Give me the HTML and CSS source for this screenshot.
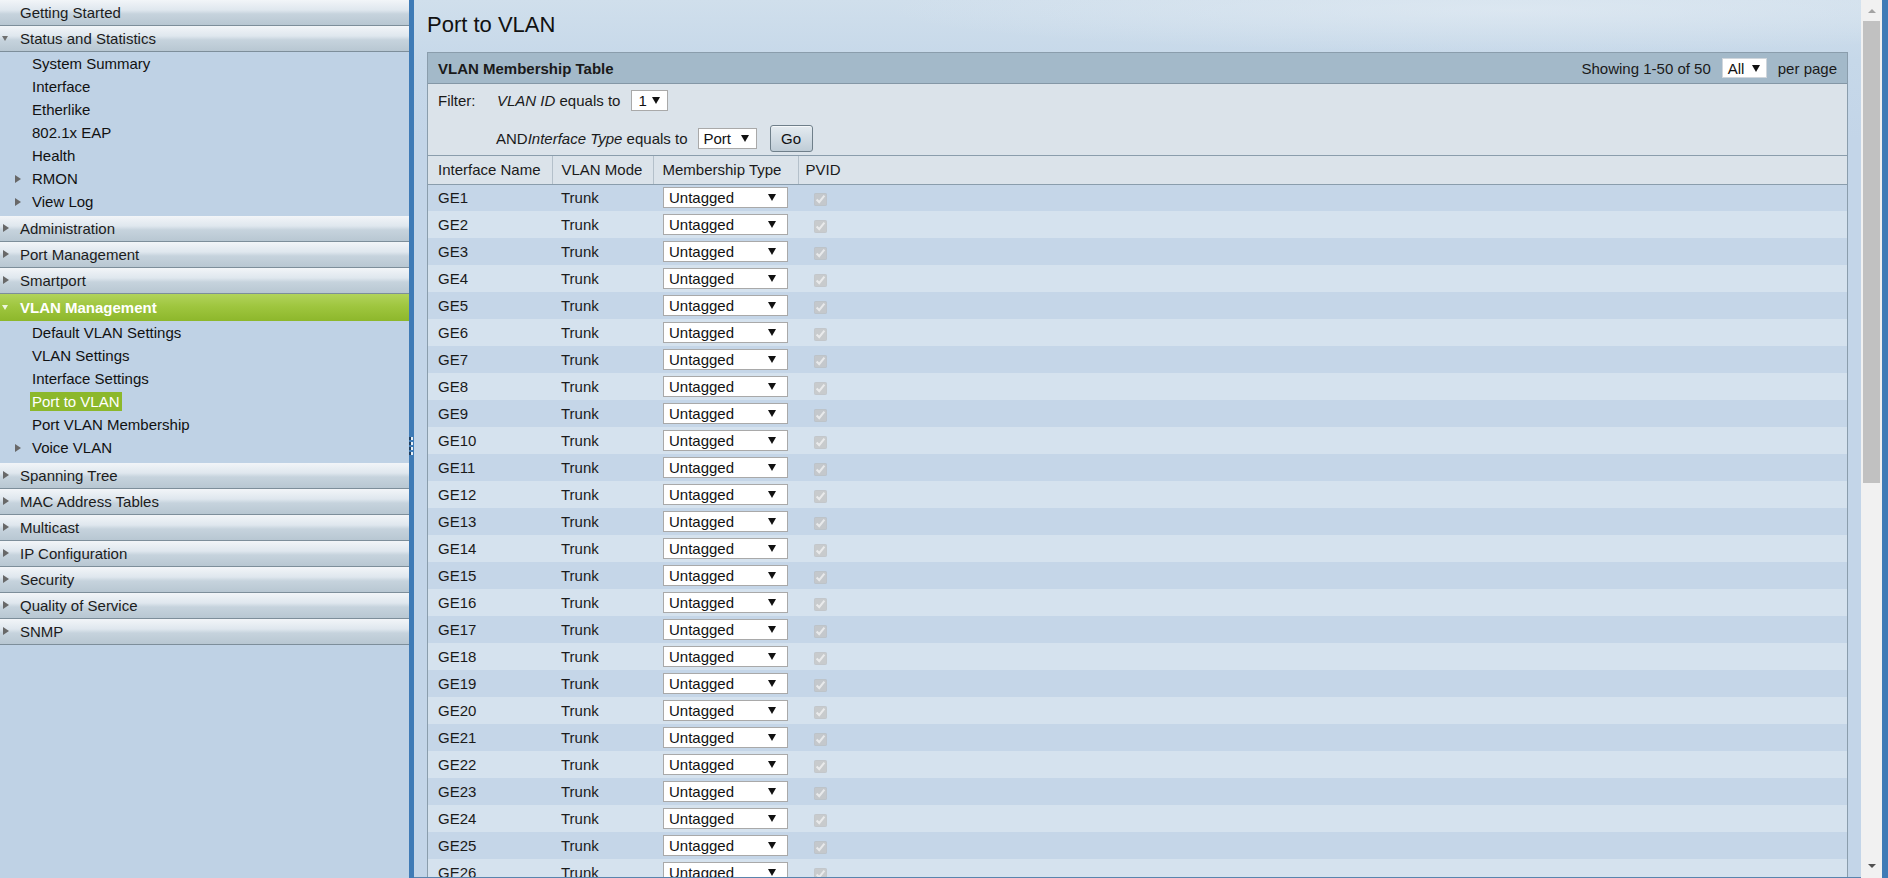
FILE: index.html
```html
<!DOCTYPE html>
<html>
<head>
<meta charset="utf-8">
<title>Port to VLAN</title>
<link rel="stylesheet" href="styles.css">
</head>
<body>
<div class="app">
  <nav class="sidebar">
    <div class="sec"><span class="tri none"></span>Getting Started</div>
    <div class="sec"><span class="tri down"></span>Status and Statistics</div>
    <ul class="sub">
      <li><span class="tri none"></span>System Summary</li>
      <li><span class="tri none"></span>Interface</li>
      <li><span class="tri none"></span>Etherlike</li>
      <li><span class="tri none"></span>802.1x EAP</li>
      <li><span class="tri none"></span>Health</li>
      <li><span class="tri right"></span>RMON</li>
      <li><span class="tri right"></span>View Log</li>
    </ul>
    <div class="sec"><span class="tri right"></span>Administration</div>
    <div class="sec"><span class="tri right"></span>Port Management</div>
    <div class="sec"><span class="tri right"></span>Smartport</div>
    <div class="sec active"><span class="tri down"></span>VLAN Management</div>
    <ul class="sub sub-vlan">
      <li><span class="tri none"></span>Default VLAN Settings</li>
      <li><span class="tri none"></span>VLAN Settings</li>
      <li><span class="tri none"></span>Interface Settings</li>
      <li><span class="tri none"></span><span class="current">Port to VLAN</span></li>
      <li><span class="tri none"></span>Port VLAN Membership</li>
      <li><span class="tri right"></span>Voice VLAN</li>
    </ul>
    <div class="sec"><span class="tri right"></span>Spanning Tree</div>
    <div class="sec"><span class="tri right"></span>MAC Address Tables</div>
    <div class="sec"><span class="tri right"></span>Multicast</div>
    <div class="sec"><span class="tri right"></span>IP Configuration</div>
    <div class="sec"><span class="tri right"></span>Security</div>
    <div class="sec"><span class="tri right"></span>Quality of Service</div>
    <div class="sec"><span class="tri right"></span>SNMP</div>
  </nav>
  <div class="splitter"><span class="grip"><i></i><i></i><i></i><i></i></span></div>
  <main class="content">
    <h1 class="page-title">Port to VLAN</h1>
    <section class="panel">
      <div class="panel-head">
        <span class="panel-title">VLAN Membership Table</span>
        <div class="paging">
          <span>Showing 1-50 of 50</span>
          <span class="sel sel-all">All<b class="arrow"></b></span>
          <span>per page</span>
        </div>
      </div>
      <div class="filter">
        <div class="frow frow1">
          <span class="flabel">Filter:</span>
          <span><em>VLAN ID</em> equals to</span>
          <span class="sel sel-id">1<b class="arrow"></b></span>
        </div>
        <div class="frow frow2">
          <span class="flabel"></span>
          <span>AND<em>Interface Type</em> equals to</span>
          <span class="sel sel-type">Port<b class="arrow"></b></span>
          <button class="go">Go</button>
        </div>
      </div>
      <table class="grid">
        <thead>
          <tr><th class="c1">Interface Name</th><th class="c2">VLAN Mode</th><th class="c3">Membership Type</th><th class="c4">PVID</th></tr>
        </thead>
        <tbody>
          <tr><td>GE1</td><td>Trunk</td><td><span class="sel sel-row">Untagged<b class="arrow"></b></span></td><td class="pv"><input type="checkbox" checked disabled></td></tr>
          <tr><td>GE2</td><td>Trunk</td><td><span class="sel sel-row">Untagged<b class="arrow"></b></span></td><td class="pv"><input type="checkbox" checked disabled></td></tr>
          <tr><td>GE3</td><td>Trunk</td><td><span class="sel sel-row">Untagged<b class="arrow"></b></span></td><td class="pv"><input type="checkbox" checked disabled></td></tr>
          <tr><td>GE4</td><td>Trunk</td><td><span class="sel sel-row">Untagged<b class="arrow"></b></span></td><td class="pv"><input type="checkbox" checked disabled></td></tr>
          <tr><td>GE5</td><td>Trunk</td><td><span class="sel sel-row">Untagged<b class="arrow"></b></span></td><td class="pv"><input type="checkbox" checked disabled></td></tr>
          <tr><td>GE6</td><td>Trunk</td><td><span class="sel sel-row">Untagged<b class="arrow"></b></span></td><td class="pv"><input type="checkbox" checked disabled></td></tr>
          <tr><td>GE7</td><td>Trunk</td><td><span class="sel sel-row">Untagged<b class="arrow"></b></span></td><td class="pv"><input type="checkbox" checked disabled></td></tr>
          <tr><td>GE8</td><td>Trunk</td><td><span class="sel sel-row">Untagged<b class="arrow"></b></span></td><td class="pv"><input type="checkbox" checked disabled></td></tr>
          <tr><td>GE9</td><td>Trunk</td><td><span class="sel sel-row">Untagged<b class="arrow"></b></span></td><td class="pv"><input type="checkbox" checked disabled></td></tr>
          <tr><td>GE10</td><td>Trunk</td><td><span class="sel sel-row">Untagged<b class="arrow"></b></span></td><td class="pv"><input type="checkbox" checked disabled></td></tr>
          <tr><td>GE11</td><td>Trunk</td><td><span class="sel sel-row">Untagged<b class="arrow"></b></span></td><td class="pv"><input type="checkbox" checked disabled></td></tr>
          <tr><td>GE12</td><td>Trunk</td><td><span class="sel sel-row">Untagged<b class="arrow"></b></span></td><td class="pv"><input type="checkbox" checked disabled></td></tr>
          <tr><td>GE13</td><td>Trunk</td><td><span class="sel sel-row">Untagged<b class="arrow"></b></span></td><td class="pv"><input type="checkbox" checked disabled></td></tr>
          <tr><td>GE14</td><td>Trunk</td><td><span class="sel sel-row">Untagged<b class="arrow"></b></span></td><td class="pv"><input type="checkbox" checked disabled></td></tr>
          <tr><td>GE15</td><td>Trunk</td><td><span class="sel sel-row">Untagged<b class="arrow"></b></span></td><td class="pv"><input type="checkbox" checked disabled></td></tr>
          <tr><td>GE16</td><td>Trunk</td><td><span class="sel sel-row">Untagged<b class="arrow"></b></span></td><td class="pv"><input type="checkbox" checked disabled></td></tr>
          <tr><td>GE17</td><td>Trunk</td><td><span class="sel sel-row">Untagged<b class="arrow"></b></span></td><td class="pv"><input type="checkbox" checked disabled></td></tr>
          <tr><td>GE18</td><td>Trunk</td><td><span class="sel sel-row">Untagged<b class="arrow"></b></span></td><td class="pv"><input type="checkbox" checked disabled></td></tr>
          <tr><td>GE19</td><td>Trunk</td><td><span class="sel sel-row">Untagged<b class="arrow"></b></span></td><td class="pv"><input type="checkbox" checked disabled></td></tr>
          <tr><td>GE20</td><td>Trunk</td><td><span class="sel sel-row">Untagged<b class="arrow"></b></span></td><td class="pv"><input type="checkbox" checked disabled></td></tr>
          <tr><td>GE21</td><td>Trunk</td><td><span class="sel sel-row">Untagged<b class="arrow"></b></span></td><td class="pv"><input type="checkbox" checked disabled></td></tr>
          <tr><td>GE22</td><td>Trunk</td><td><span class="sel sel-row">Untagged<b class="arrow"></b></span></td><td class="pv"><input type="checkbox" checked disabled></td></tr>
          <tr><td>GE23</td><td>Trunk</td><td><span class="sel sel-row">Untagged<b class="arrow"></b></span></td><td class="pv"><input type="checkbox" checked disabled></td></tr>
          <tr><td>GE24</td><td>Trunk</td><td><span class="sel sel-row">Untagged<b class="arrow"></b></span></td><td class="pv"><input type="checkbox" checked disabled></td></tr>
          <tr><td>GE25</td><td>Trunk</td><td><span class="sel sel-row">Untagged<b class="arrow"></b></span></td><td class="pv"><input type="checkbox" checked disabled></td></tr>
          <tr><td>GE26</td><td>Trunk</td><td><span class="sel sel-row">Untagged<b class="arrow"></b></span></td><td class="pv"><input type="checkbox" checked disabled></td></tr>
          <tr><td>GE27</td><td>Trunk</td><td><span class="sel sel-row">Untagged<b class="arrow"></b></span></td><td class="pv"><input type="checkbox" checked disabled></td></tr>
        </tbody>
      </table>
    </section>
  </main>
  <div class="scrollbar">
    <span class="sb-up"></span>
    <span class="sb-thumb"></span>
    <span class="sb-track"></span>
    <span class="sb-down"></span>
  </div>
  <div class="edge"></div>
</div>
</body>
</html>
```

FILE: styles.css
```css
* { box-sizing: border-box; }
html, body { margin: 0; padding: 0; }
body {
  width: 1888px;
  height: 878px;
  overflow: hidden;
  font-family: "Liberation Sans", Arial, sans-serif;
  font-size: 15px;
  color: #1a1a1a;
  background: #c3d5e8;
}
.app {
  display: flex;
  width: 1888px;
  height: 878px;
}

/* ---------- sidebar ---------- */
.sidebar {
  width: 409px;
  flex: none;
  background: #bfd2e5;
  height: 878px;
}
.sec {
  height: 26px;
  display: flex;
  align-items: center;
  padding-left: 2px;
  padding-bottom: 1px;
  border-bottom: 1px solid #7d8e9a;
  background: linear-gradient(#f2f5f8 0%, #dfe7ee 40%, #c6d3dd 56%, #b8c7d2 100%);
  color: #1c1c1c;
}
.sec.active {
  height: 27px;
  border-bottom: none;
  background: linear-gradient(#b1d35b 0%, #9fc63f 45%, #8db72b 100%);
  color: #fff;
  font-weight: bold;
}
.tri {
  display: inline-block;
  flex: none;
  width: 18px;
  height: 10px;
  position: relative;
}
.tri.right::before {
  content: "";
  position: absolute;
  left: 1px;
  top: 1px;
  border-left: 6px solid #686868;
  border-top: 4px solid transparent;
  border-bottom: 4px solid transparent;
}
.tri.down::before {
  content: "";
  position: absolute;
  left: 0;
  top: 3px;
  border-top: 5px solid #707070;
  border-left: 3px solid transparent;
  border-right: 3px solid transparent;
}
.sec.active .tri.down::before { border-top-color: #eef5dc; }
.sub {
  list-style: none;
  margin: 0;
  padding: 0 0 3px 0;
}
.sub-vlan { padding-bottom: 4px; }
.sub li {
  height: 23px;
  display: flex;
  align-items: center;
  padding-left: 14px;
  color: #111;
}
.sub li .tri.right::before { top: 1px; }
.current {
  background: #8cb82b;
  color: #fff;
  padding: 0 2px;
  margin-left: -2px;
  line-height: 19px;
}

/* ---------- splitter ---------- */
.splitter {
  width: 5px;
  flex: none;
  background: #3f7bb6;
  position: relative;
}
.grip {
  position: absolute;
  left: 0;
  top: 437px;
  width: 4px;
  display: flex;
  flex-direction: column;
  gap: 2px;
}
.grip i {
  display: block;
  width: 4px;
  height: 3px;
  background: linear-gradient(90deg, #1d3f62 50%, #e8f0f8 50%);
}

/* ---------- content ---------- */
.content {
  flex: 1;
  height: 878px;
  overflow: hidden;
  padding: 0 13px 0 13px;
  border-bottom: 1px solid #5a84ad;
  background:
    radial-gradient(ellipse 900px 60px at 1100px 10px, rgba(230,238,245,0.55), rgba(230,238,245,0) 70%),
    linear-gradient(#d0dfec 0px, #c6d8e9 60px, #c3d5e8 140px);
}
.page-title {
  margin: 0 0 14px 0;
  padding-top: 12px;
  font-size: 22px;
  line-height: 26px;
  font-weight: normal;
  color: #111;
}
.panel {
  border: 1px solid #8a9dac;
  border-bottom: none;
  background: #dbe3ea;
}
.panel-head {
  height: 31px;
  display: flex;
  align-items: center;
  justify-content: space-between;
  padding: 0 10px 0 10px;
  background: #a3b9c9;
  border-bottom: 1px solid #8497a6;
}
.panel-title {
  font-weight: bold;
  color: #1a1a1a;
}
.paging {
  display: flex;
  align-items: center;
  gap: 11px;
  color: #1a1a1a;
}

/* fake select boxes */
.sel {
  display: inline-flex;
  align-items: center;
  justify-content: space-between;
  background: #fff;
  border: 1px solid #a9a9a9;
  color: #111;
  height: 21px;
}
.arrow {
  display: inline-block;
  width: 0;
  height: 0;
  border-top: 7px solid #111;
  border-left: 4px solid transparent;
  border-right: 4px solid transparent;
}
.sel-all { width: 45px; height: 20px; padding: 0 6px 0 5px; border-color: #d0d6dc; }
.sel-id { width: 37px; padding: 0 7px 0 6px; margin-left: 11px; }
.sel-type { width: 59px; padding: 0 7px 0 5px; margin-left: 10px; }
.sel-row { width: 125px; height: 21px; padding: 0 11px 0 5px; }

.filter {
  padding: 4px 0 3px 10px;
  border-bottom: 1px solid #8a9dac;
}
.frow {
  display: flex;
  align-items: center;
}
.frow1 { height: 24px; }
.frow2 { height: 28px; margin-top: 12px; }
.flabel { width: 59px; flex: none; }
.frow2 .flabel { width: 58px; }
.go {
  margin-left: 13px;
  width: 43px;
  height: 27px;
  font-family: "Liberation Sans", Arial, sans-serif;
  font-size: 15px;
  color: #111;
  border: 1px solid #6f7f8a;
  border-radius: 3px;
  background: linear-gradient(#e4ebf0 0%, #d2dce4 50%, #bfccd6 100%);
  box-shadow: inset 0 1px 0 #f5f8fa;
  padding: 0;
}

/* ---------- table ---------- */
.grid {
  width: 100%;
  border-collapse: collapse;
  table-layout: fixed;
}
.grid th {
  height: 28px;
  text-align: left;
  font-weight: normal;
  padding: 0 0 0 9px;
  background: #dbe3ea;
  border-right: 1px solid #b4c0ca;
  border-bottom: 1px solid #8a9dac;
  color: #1a1a1a;
}
.grid th.c1 { width: 124px; padding-left: 10px; }
.grid th.c2 { width: 101px; }
.grid th.c3 { width: 145px; }
.grid th.c4 { border-right: none; padding-left: 7px; }
.grid td {
  height: 27px;
  padding: 0 0 0 9px;
  color: #1a1a1a;
}
.grid td:first-child { padding-left: 10px; }
.grid td:nth-child(3) { padding-left: 10px; }
.grid tbody tr:nth-child(odd) td { background: #c5d6e8; }
.grid tbody tr:nth-child(even) td { background: #d5e2ee; }
.grid td.pv { padding-left: 16px; }
.grid td.pv input {
  margin: 0;
  width: 13px;
  height: 13px;
  vertical-align: middle;
}

/* ---------- scrollbar ---------- */
.scrollbar {
  width: 21px;
  flex: none;
  height: 878px;
  background: #f1f1f1;
  display: flex;
  flex-direction: column;
  align-items: center;
}
.sb-up {
  flex: none;
  width: 0;
  height: 0;
  border-bottom: 4px solid #a3a3a3;
  border-left: 4px solid transparent;
  border-right: 4px solid transparent;
  margin-top: 9px;
  margin-bottom: 8px;
}
.sb-thumb {
  width: 17px;
  height: 462px;
  flex: none;
  background: #c1c1c1;
}
.sb-track { flex: 1; }
.sb-down {
  width: 0;
  height: 0;
  border-top: 4px solid #505050;
  border-left: 4px solid transparent;
  border-right: 4px solid transparent;
  margin-bottom: 10px;
}
.edge {
  width: 6px;
  flex: none;
  background: #3f7bb6;
}
```
